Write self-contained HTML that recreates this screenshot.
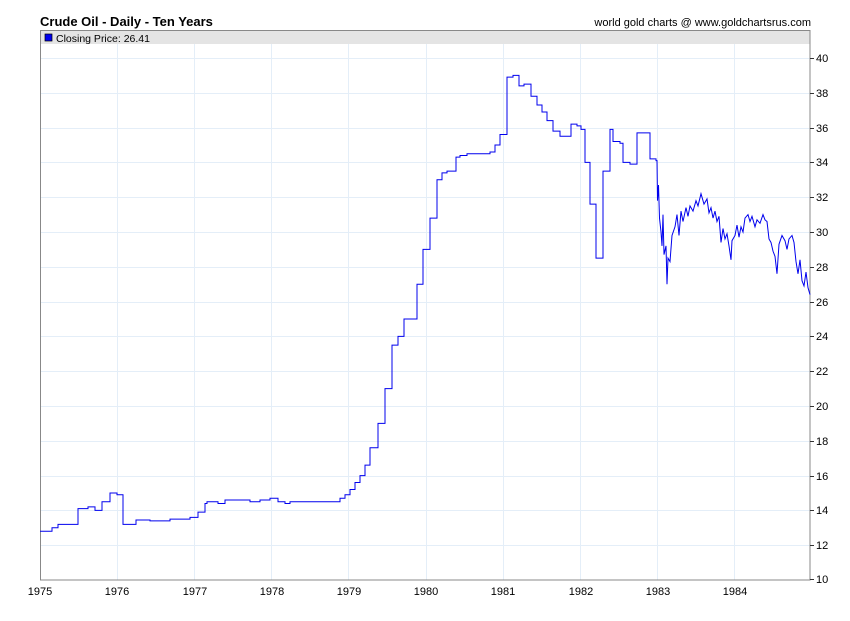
<!DOCTYPE html>
<html><head><style>
body{margin:0;background:#fff;width:850px;height:616px;overflow:hidden;font-family:"Liberation Sans",sans-serif}
</style></head><body>
<svg width="850" height="616" xmlns="http://www.w3.org/2000/svg" font-family="Liberation Sans, sans-serif">
<text x="40" y="26" font-size="13" font-weight="bold" fill="#000">Crude Oil - Daily - Ten Years</text>
<text x="811" y="26" font-size="11" text-anchor="end" fill="#000">world gold charts @ www.goldchartsrus.com</text>
<rect x="40" y="31" width="770" height="13" fill="#e4e4e4"/>
<g stroke="#e4eef8" stroke-width="1">
<path d="M117.5 44V580M194.5 44V580M271.5 44V580M348.5 44V580M426.5 44V580M503.5 44V580M580.5 44V580M657.5 44V580M734.5 44V580"/>
<path d="M40 58.5H810M40 93.5H810M40 128.5H810M40 162.5H810M40 197.5H810M40 232.5H810M40 267.5H810M40 302.5H810M40 336.5H810M40 371.5H810M40 406.5H810M40 441.5H810M40 476.5H810M40 510.5H810M40 545.5H810"/>
</g>
<rect x="40.5" y="30.5" width="769.5" height="549.5" fill="none" stroke="#888"/>
<rect x="45" y="34" width="7" height="7" fill="#0000ee" stroke="#000" stroke-width="0.7"/>
<text x="56" y="42" font-size="10.5">Closing Price: 26.41</text>
<g stroke="#333"><path d="M810 58.5h4M810 93.5h4M810 128.5h4M810 162.5h4M810 197.5h4M810 232.5h4M810 267.5h4M810 302.5h4M810 336.5h4M810 371.5h4M810 406.5h4M810 441.5h4M810 476.5h4M810 510.5h4M810 545.5h4M810 579.5h4"/></g>
<g font-size="11" fill="#000">
<text x="816" y="62">40</text><text x="816" y="97">38</text><text x="816" y="132">36</text><text x="816" y="166">34</text><text x="816" y="201">32</text><text x="816" y="236">30</text><text x="816" y="271">28</text><text x="816" y="306">26</text><text x="816" y="340">24</text><text x="816" y="375">22</text><text x="816" y="410">20</text><text x="816" y="445">18</text><text x="816" y="480">16</text><text x="816" y="514">14</text><text x="816" y="549">12</text><text x="816" y="583">10</text>
</g>
<g font-size="11" text-anchor="middle">
<text x="40" y="595">1975</text><text x="117" y="595">1976</text><text x="195" y="595">1977</text><text x="272" y="595">1978</text><text x="349" y="595">1979</text><text x="426" y="595">1980</text><text x="503" y="595">1981</text><text x="581" y="595">1982</text><text x="658" y="595">1983</text><text x="735" y="595">1984</text>
</g>
<path transform="translate(0,754) scale(1,-17.4)" vector-effect="non-scaling-stroke" fill="none" stroke="#0000ee" stroke-width="1"
d="M40 12.8H52V13H58V13.2H78V14.1H88V14.2H95V14H102V14.5H110V15H117V14.9H123V13.2H136V13.45H150V13.4H170V13.5H190V13.6H198V13.9H205V14.4H207V14.5H218V14.4H225V14.6H240V14.6H250V14.5H260V14.6H270V14.7H278V14.5H285V14.4H290V14.5H330V14.5H340V14.7H345V14.9H350V15.2H355V15.6H360V16H365V16.6H370V17.6H378V19H385V21H392V23.5H398V24H404V25H417V27H423V29H430V30.8H437V33H442V33.4H447V33.5H456V34.3H460V34.4H467V34.5H490V34.6H495V35H500V35.6H507V38.9H513V39H519V38.4H524V38.5H531V37.8H537V37.3H542V36.9H547V36.4H553V35.8H560V35.5H571V36.2H577V36.1H581V35.9H585V34H590V31.6H596V28.5H603V33.5H610V35.9H613V35.2H620V35.1H623V34H630V33.9H637V35.7H650V34.2H656V34.1H657L657.5 31.8L658.5 32.7L659.5 30.8L661 30L662 29.2L663 31L664 28.7L666 29.2L667 27L668 28.5L670 28.3L672 29.8L675 30.3L677 31L679 29.8L681 31.2L683 30.6L686 31.4L688 30.9L690 31.5L693 31.2L696 31.8L698 31.5L701 32.2L704 31.6L707 31.9L709 31.1L711 31.4L713 30.8L715 31.2L717 30.6L719 30.9L721 29.4L723 30.2L725 29.6L727 29.9L729 29.2L731 28.4L732 29.5L735 29.8L737 30.4L739 29.7L741 30.3L743 30L745 30.8L748 31L750 30.6L752 30.9L755 30.3L757 30.7L760 30.5L763 31L765 30.7L767 30.6L769 29.6L771 29.4L773 28.9L775 28.6L777 27.6L779 29.3L782 29.8L785 29.5L787 29L789 29.6L792 29.8L794 29.4L796 28.3L798 27.6L800 28.4L802 27.2L804 26.9L806 27.7L808 26.8L810 26.4"/>
</svg>
</body></html>
